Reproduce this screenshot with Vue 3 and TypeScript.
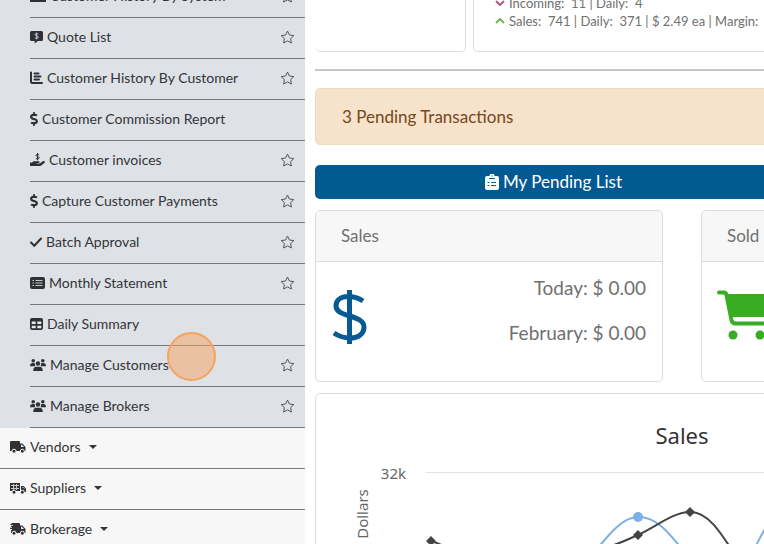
<script setup lang="ts">
interface ReportItem {
  icon: string
  label: string
  starred: boolean
}

const reports: ReportItem[] = [
  { icon: 'chart', label: 'Customer History By System', starred: true },
  { icon: 'quote', label: 'Quote List', starred: true },
  { icon: 'bars', label: 'Customer History By Customer', starred: true },
  { icon: 'dollar', label: 'Customer Commission Report', starred: false },
  { icon: 'hand', label: 'Customer invoices', starred: true },
  { icon: 'dollar', label: 'Capture Customer Payments', starred: true },
  { icon: 'check', label: 'Batch Approval', starred: true },
  { icon: 'list', label: 'Monthly Statement', starred: true },
  { icon: 'table', label: 'Daily Summary', starred: false },
  { icon: 'users', label: 'Manage Customers', starred: true },
  { icon: 'users', label: 'Manage Brokers', starred: true },
]

const groups = [
  { icon: 'truck', label: 'Vendors' },
  { icon: 'supply', label: 'Suppliers' },
  { icon: 'broker', label: 'Brokerage' },
]

const iconWidths: Record<string, number> = {
  chart: 16, quote: 13, bars: 13, dollar: 8, hand: 15, check: 12,
  list: 15, table: 13, users: 16, truck: 16, supply: 16, broker: 16,
}
</script>

<template>
  <div class="page">
    <nav class="sidebar" aria-label="Main menu">
      <ul class="reports">
        <li v-for="item in reports" :key="item.label" class="report">
          <a href="#" class="link">
            <svg class="icon" :width="iconWidths[item.icon]" height="14" :viewBox="`0 0 ${iconWidths[item.icon]} 14`" aria-hidden="true">
              <path v-if="item.icon === 'chart'" d="M0 1h16v12H0z" />
              <template v-else-if="item.icon === 'quote'">
                <path d="M1.500 1h10A1.500 1.500 0 0 1 13 2.500v7A1.500 1.500 0 0 1 11.500 11H8l-3.300 2.600V11H1.500A1.500 1.500 0 0 1 0 9.500v-7A1.500 1.500 0 0 1 1.500 1z" />
                <path class="cut" d="M8.300 4.200C7 3.200 5 3.400 5 4.700s3.200.8 3.200 2.400S6 8.700 4.900 7.700M6.600 2.600v6.800" />
              </template>
              <path v-else-if="item.icon === 'bars'" class="line" d="M1 1.500v9q0 1.500 1.500 1.500H12M4.500 2.500h4M4.500 5.500h6M4.500 8.500h4.500" />
              <svg v-else-if="item.icon === 'dollar'" width="8" height="14" viewBox="0 0 288 512">
                <path d="M209.200 233.400l-108-31.600C88.700 198.200 80 186.500 80 173.500c0-16.300 13.200-29.500 29.500-29.500h66.300c12.200 0 24.200 3.700 34.200 10.500 6.100 4.100 14.300 3.100 19.500-2l34.800-34c7.100-6.900 6.100-18.400-1.800-24.500C238 74.800 207.400 64.100 176 64V16c0-8.800-7.200-16-16-16h-32c-8.800 0-16 7.200-16 16v48h-2.500C45.800 64-5.400 118.700.5 183.600c4.200 46.100 39.400 83.600 83.800 96.600l102.500 30c12.500 3.700 21.200 15.300 21.200 28.300 0 16.300-13.200 29.500-29.500 29.500h-66.300C100 368 88 364.300 78 357.500c-6.100-4.100-14.300-3.100-19.500 2l-34.800 34c-7.100 6.900-6.100 18.400 1.800 24.500 24.500 19.200 55.100 29.900 86.500 30v48c0 8.800 7.200 16 16 16h32c8.800 0 16-7.200 16-16v-48.200c46.600-.9 90.300-28.600 105.700-72.700 21.500-61.600-14.600-124.800-72.500-141.700z" />
              </svg>
              <template v-else-if="item.icon === 'hand'">
                <path d="M0 9.500h2l1.500-1.200h5.200c1.300 0 1.300 1.600 0 1.600H6.500v.5h3.200l3.200-2.200c1.300-.8 2.700.6 1.500 1.700l-3.600 2.800c-.5.300-.9.400-1.500.4H0z" />
                <path class="thin" d="M9.200 2C8 1 6 1.200 6 2.500s3.200.7 3.200 2.200S7 6.300 5.800 5.400M7.500 0v7.300" />
              </template>
              <path v-else-if="item.icon === 'check'" class="line" d="M1 7.500l3.300 3.300L11 3.500" />
              <template v-else-if="item.icon === 'list'">
                <rect y="1" width="15" height="12" rx="2" />
                <path class="cut" d="M2.500 4.500h1.500M5.500 4.500h7M2.500 7h1.500M5.500 7h7M2.500 9.500h1.500M5.500 9.500h7" />
              </template>
              <template v-else-if="item.icon === 'table'">
                <rect y="1" width="13" height="12" rx="2" />
                <path class="pane" d="M1.700 4.500h4v2.600h-4zM7.300 4.500h4v2.600h-4zM1.700 8.700h4v2.600h-4zM7.300 8.700h4v2.600h-4z" />
              </template>
              <template v-else>
                <circle cx="3.200" cy="2.700" r="1.800" />
                <circle cx="12.800" cy="2.700" r="1.800" />
                <circle cx="8" cy="5.500" r="2.200" />
                <path d="M0 8.200C0 6 1 5 2.700 5h1.200C4.900 5 5 5.500 4.900 6.500c0 .8.300 1.300.8 1.700zM16 8.200C16 6 15 5 13.300 5h-1.200c-1 0-1.100.5-1 1.500 0 .8-.3 1.300-.8 1.700zM3.200 13c0-3 1.300-4.200 3.300-4.200h3c2 0 3.300 1.200 3.300 4.200z" />
              </template>
            </svg>
            <span>{{ item.label }}</span>
          </a>
          <button v-if="item.starred" type="button" class="star" :aria-label="`Add ${item.label} to favorites`">
            <svg width="15" height="14" viewBox="0 0 15 14" aria-hidden="true">
              <path d="M7.500 1l1.900 4 4.400.6-3.200 3 .8 4.400-3.900-2.100L3.600 13l.8-4.400-3.200-3 4.400-.6z" />
            </svg>
          </button>
        </li>
      </ul>
      <ul class="groups">
        <li v-for="group in groups" :key="group.label">
          <button type="button" class="group" aria-expanded="false">
            <svg class="icon" width="16" height="14" viewBox="0 0 16 14" aria-hidden="true">
              <template v-if="group.icon === 'truck'">
                <path d="M1 1h8q1 0 1 1v1.500h2.300L15.500 7v4H0V2q0-1 1-1z" />
                <path class="pane" d="M11 4.700h1l2 2.300h-3z" />
              </template>
              <template v-else-if="group.icon === 'supply'">
                <path d="M0 2h10v8H0zM11 5h2.500L16 7.500V11h-5z" />
                <path class="cut" d="M1 4.500h8M1 7.500h8M3.500 3v6M6.500 3v6M12.500 6.500h1l1 1.200" />
              </template>
              <template v-else>
                <path d="M2 1h7q1 0 1 1v1.500h2.300L15.500 7v4H1V8h1V7H0V5.800h2V5H1V3.800h2V3H0L2 1z" />
                <path class="pane" d="M11 4.700h1l2 2.300h-3z" />
              </template>
              <circle class="wheel" cx="4" cy="11.200" r="2" />
              <circle class="wheel" cx="12.300" cy="11.200" r="2" />
            </svg>
            <span>{{ group.label }}</span>
            <span class="caret"></span>
          </button>
        </li>
      </ul>
    </nav>

    <main class="content">
      <section class="top">
        <div class="card stat"></div>
        <div class="card stat activity">
          <p>
            <svg width="10" height="6" viewBox="0 0 10 6" aria-hidden="true"><path class="down" d="M1 1l4 4 4-4" /></svg>
            <span>Incoming: &nbsp;11 | Daily: &nbsp;4</span>
          </p>
          <p>
            <svg width="10" height="6" viewBox="0 0 10 6" aria-hidden="true"><path class="up" d="M1 5l4-4 4 4" /></svg>
            <span>Sales: &nbsp;741 | Daily: &nbsp;371 | $ 2.49 ea | Margin:</span>
          </p>
        </div>
      </section>
      <hr />
      <div class="alert" role="status">3 Pending Transactions</div>
      <button type="button" class="pending">
        <svg width="14" height="16" viewBox="0 0 14 16" aria-hidden="true">
          <path d="M2 2h2.500a2.500 2.500 0 0 1 5 0H12q2 0 2 2v10q0 2-2 2H2q-2 0-2-2V4q0-2 2-2z" />
          <path class="mark" d="M4 4.500h6M2.500 8.500h2M6 8.500h5M2.500 11.500h2M6 11.500h5M7 1.500v1" />
        </svg>
        <span>My Pending List</span>
      </button>
      <section class="totals">
        <article class="card">
          <h2>Sales</h2>
          <div class="body">
            <svg width="36" height="54" viewBox="0 0 36 54" aria-hidden="true">
              <path class="money" d="M31 11C25 7 19 6.500 16 6.500C9 6.500 4 10 4 16C4 28 32 24 32 37C32 44 26 48 18 48C12 48 7 46.500 2 43M17.500 0v54" />
            </svg>
            <div class="figures">
              <p>Today: $ 0.00</p>
              <p>February: $ 0.00</p>
            </div>
          </div>
        </article>
        <article class="card">
          <h2>Sold</h2>
          <div class="body cart">
            <svg width="62" height="50" viewBox="0 0 62 50" aria-hidden="true">
              <path class="basket" d="M8 4h54l-5 23H13z" />
              <path class="frame" d="M2 2.500h5q2 0 2.500 2.500l5 25q.8 3.500 4 3.500H53" />
              <circle class="basket" cx="16" cy="45" r="4.500" />
              <circle class="basket" cx="43" cy="45" r="4.500" />
            </svg>
          </div>
        </article>
      </section>
      <section class="card chart">
        <svg viewBox="0 0 732 400" role="img" aria-label="Sales in dollars">
          <text class="title" x="366" y="50" text-anchor="middle">Sales</text>
          <text class="tick" x="90" y="85" text-anchor="end">32k</text>
          <text class="axis" transform="translate(52 120) rotate(-90)" text-anchor="middle">Dollars</text>
          <path class="grid" d="M110 78.500H723" />
          <path class="blue" d="M262 178C285 152 302 123 322 123S353 139 374 165S419 190 426 180S441 143 461 116" />
          <path class="dark" d="M115 147C138 153 146 172 167 185S245 165 270 159S304 149 322 141S357 118 374 118S402 133 426 172" />
          <circle class="dot" cx="322" cy="123" r="5" />
          <path class="diamond" d="M115 142l5 5-5 5-5-5zM322 136l5 5-5 5-5-5zM374 113l5 5-5 5-5-5z" />
        </svg>
      </section>
    </main>
    <span class="pointer" aria-hidden="true"></span>
  </div>
</template>

<style>
body {
  overflow: hidden;
}
</style>

<style scoped>
.page {
  position: relative;
  display: flex;
  gap: 10px;
  height: 100vh;
  overflow: hidden;
  background: #fff;
  color: #333538;
  font-family: Lato, "Open Sans", sans-serif;
  font-size: 14px;
  line-height: 20px;
}
ul {
  margin: 0;
  padding: 0;
  list-style: none;
}
p,
h2 {
  margin: 0;
  font-weight: 400;
}
button {
  border: 0;
  font: inherit;
  color: inherit;
  cursor: pointer;
}
.sidebar {
  flex: 0 0 305px;
  background: #f7f7f7;
}
.reports {
  margin-top: -23px;
  padding-left: 30px;
  background: #dee1e6;
}
.report {
  display: flex;
  align-items: center;
  justify-content: space-between;
  box-sizing: border-box;
  height: 41px;
  padding: 0 10px 3px 0;
  border-bottom: 1px solid #74777c;
}
.link {
  display: flex;
  align-items: center;
  gap: 4px;
  color: inherit;
  text-decoration: none;
}
.icon {
  flex: none;
  fill: #2f3134;
}
.line {
  fill: none;
  stroke: #2f3134;
  stroke-width: 2;
  stroke-linecap: round;
}
.thin {
  fill: none;
  stroke: #2f3134;
}
.cut {
  fill: none;
  stroke: #c4c7cb;
}
.pane {
  fill: #e4e6ea;
}
.wheel {
  stroke: #f7f7f7;
}
.star {
  display: flex;
  padding: 0;
  background: none;
}
.star path {
  fill: none;
  stroke: #54575c;
  stroke-linejoin: round;
}
.group {
  display: flex;
  align-items: center;
  gap: 4px;
  width: 100%;
  height: 41px;
  padding: 0 10px 3px;
  border-bottom: 1px solid #74777c;
  background: #f7f7f7;
}
.caret {
  margin-left: 4px;
  border: 4px solid transparent;
  border-top-color: #333538;
  border-bottom-width: 0;
}
.content {
  display: flex;
  flex: 0 0 calc(100vw - 30px);
  flex-direction: column;
  color: #707070;
}
.card {
  box-sizing: border-box;
  border: 1px solid #dcdcdc;
  border-radius: 5px;
  background: #fff;
}
.top {
  display: grid;
  flex: none;
  grid-template-columns: 151px 1fr;
  gap: 7px;
}
.stat {
  border-top: 0;
  border-radius: 0 0 5px 5px;
}
.stat:first-child {
  border-left: 0;
}
.activity {
  margin-top: -6px;
  padding: 0 21px 21px;
  font-size: 13px;
  line-height: 18px;
  white-space: nowrap;
}
.activity p {
  display: flex;
  align-items: center;
  gap: 4px;
}
.activity path {
  fill: none;
  stroke-width: 2;
}
.down {
  stroke: #b5577f;
}
.up {
  stroke: #6bb950;
}
hr {
  flex: none;
  width: 100%;
  height: 2px;
  margin: 17px 0;
  border: 0;
  background: #c6c6c6;
}
.alert {
  flex: none;
  padding: 17px 26px;
  border: 1px solid #eed9c2;
  border-radius: 5px;
  background: #f7e2cb;
  color: #75471b;
  font-size: 17px;
  line-height: 21px;
}
.pending {
  display: flex;
  flex: none;
  align-items: center;
  justify-content: center;
  gap: 4px;
  width: 65%;
  height: 34px;
  margin: 20px 0 11px;
  border-radius: 5px;
  background: #035a92;
  color: #fff;
  font-size: 17px;
}
.pending svg {
  fill: #fff;
}
.mark {
  stroke: #035a92;
}
.totals {
  display: grid;
  flex: none;
  grid-template-columns: 1fr 1fr;
  gap: 38px;
}
h2 {
  padding: 14px 25px 15px;
  border-bottom: 1px solid #dcdcdc;
  border-radius: 4px 4px 0 0;
  background: #f7f7f7;
  font-size: 17px;
  line-height: 21px;
}
.body {
  display: flex;
  align-items: center;
  justify-content: space-between;
  padding: 14px 16px 37px;
}
.cart {
  padding-left: 15px;
}
.body svg {
  margin-top: 14px;
}
.figures {
  display: grid;
  gap: 23px;
  font-size: 19px;
  line-height: 22px;
  text-align: right;
}
.money {
  fill: none;
  stroke: #075a92;
  stroke-width: 5;
}
.basket {
  fill: #38ad23;
}
.frame {
  fill: none;
  stroke: #38ad23;
  stroke-width: 4;
  stroke-linecap: round;
}
.chart {
  flex: none;
  margin-top: 11px;
}
.chart svg {
  display: block;
  width: 100%;
  font-family: "Noto Sans", "Open Sans", sans-serif;
}
.title {
  fill: #333;
  font-size: 22px;
}
.tick,
.axis {
  fill: #666;
  font-size: 15px;
}
.grid {
  stroke: #e2e2e2;
}
.blue,
.dark {
  fill: none;
  stroke: #7cb0e2;
  stroke-width: 2;
}
.dark {
  stroke: #434348;
}
.dot {
  fill: #7cb0e8;
}
.diamond {
  fill: #434348;
}
.pointer {
  position: absolute;
  top: 332px;
  left: 167px;
  box-sizing: border-box;
  width: 49px;
  height: 49px;
  border: 2px solid #f5a45f;
  border-radius: 50%;
  background: rgba(245, 164, 95, 0.5);
  pointer-events: none;
}
</style>
